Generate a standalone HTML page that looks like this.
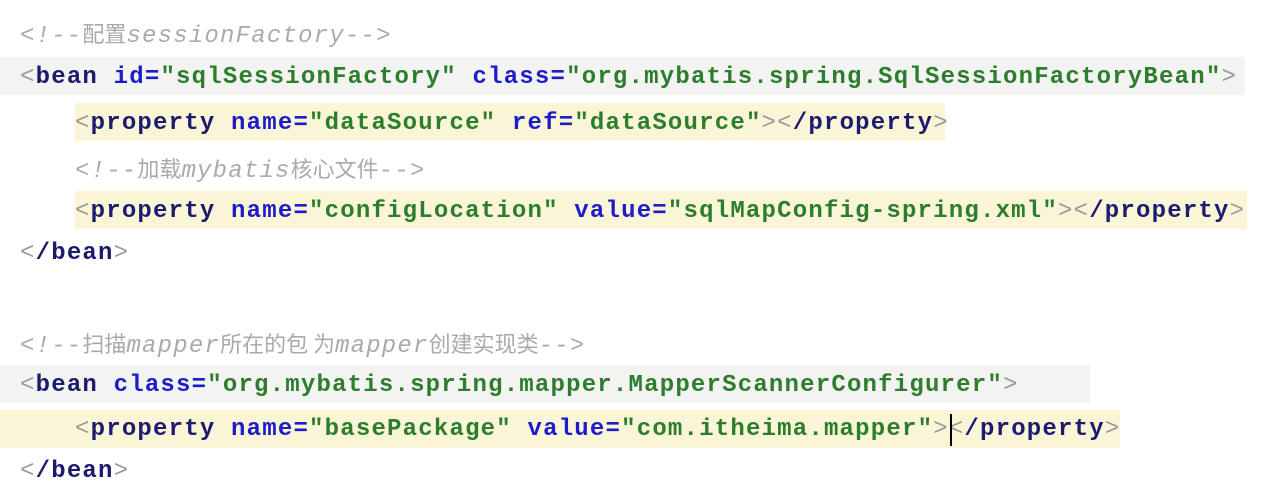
<!DOCTYPE html>
<html><head><meta charset="utf-8"><style>
html,body{margin:0;padding:0;background:#fff;width:1270px;height:496px;overflow:hidden}
.l{position:absolute;left:0;height:40px;line-height:40px;white-space:pre;font-family:"Liberation Mono","Noto Sans CJK SC",monospace;font-size:24px;font-weight:bold;letter-spacing:1.2px;color:#1c1c6e}
.hl{position:absolute;height:38px}
.a{color:#1d1dc8}.v{color:#2c7d2c}.p{color:#999;font-weight:normal}
.c{color:#aaa;font-weight:normal;font-style:italic;font-family:"Liberation Mono","Noto Sans CJK SC",monospace}
.cj{font-style:normal;font-family:"Noto Sans CJK SC",sans-serif;font-size:22px;letter-spacing:0}
</style></head><body>
<div class="hl" style="left:0;top:57px;width:1245px;background:#f3f3f2"></div>
<div class="hl" style="left:75px;top:103px;width:870px;background:#fbf5d8"></div>
<div class="hl" style="left:75px;top:191px;width:1172px;background:#fbf5d8"></div>
<div class="hl" style="left:0;top:365px;width:1090px;background:#f3f3f2"></div>
<div class="hl" style="left:0;top:410px;width:1120px;background:#fbf5d8"></div>

<div class="l" style="left:20px;top:13px"><span class="c">&lt;!--<span class="cj">配置</span>sessionFactory--&gt;</span></div>
<div class="l" style="left:20px;top:58px"><span class="p">&lt;</span>bean <span class="a">id=</span><span class="v">"sqlSessionFactory"</span> <span class="a">class=</span><span class="v">"org.mybatis.spring.SqlSessionFactoryBean"</span><span class="p">&gt;</span></div>
<div class="l" style="left:75px;top:104px"><span class="p">&lt;</span>property <span class="a">name=</span><span class="v">"dataSource"</span> <span class="a">ref=</span><span class="v">"dataSource"</span><span class="p">&gt;&lt;</span>/property<span class="p">&gt;</span></div>
<div class="l" style="left:75px;top:148px"><span class="c">&lt;!--<span class="cj">加载</span>mybatis<span class="cj">核心文件</span>--&gt;</span></div>
<div class="l" style="left:75px;top:192px"><span class="p">&lt;</span>property <span class="a">name=</span><span class="v">"configLocation"</span> <span class="a">value=</span><span class="v">"sqlMapConfig-spring.xml"</span><span class="p">&gt;&lt;</span>/property<span class="p">&gt;</span></div>
<div class="l" style="left:20px;top:234px"><span class="p">&lt;</span>/bean<span class="p">&gt;</span></div>

<div class="l" style="left:20px;top:323px"><span class="c">&lt;!--<span class="cj">扫描</span>mapper<span class="cj">所在的包 为</span>mapper<span class="cj">创建实现类</span>--&gt;</span></div>
<div class="l" style="left:20px;top:366px"><span class="p">&lt;</span>bean <span class="a">class=</span><span class="v">"org.mybatis.spring.mapper.MapperScannerConfigurer"</span><span class="p">&gt;</span></div>
<div class="l" style="left:75px;top:410px"><span class="p">&lt;</span>property <span class="a">name=</span><span class="v">"basePackage"</span> <span class="a">value=</span><span class="v">"com.itheima.mapper"</span><span class="p">&gt;&lt;</span>/property<span class="p">&gt;</span></div>
<div style="position:absolute;left:950px;top:414px;width:2px;height:32px;background:#000"></div>
<div class="l" style="left:20px;top:452px"><span class="p">&lt;</span>/bean<span class="p">&gt;</span></div>
</body></html>
